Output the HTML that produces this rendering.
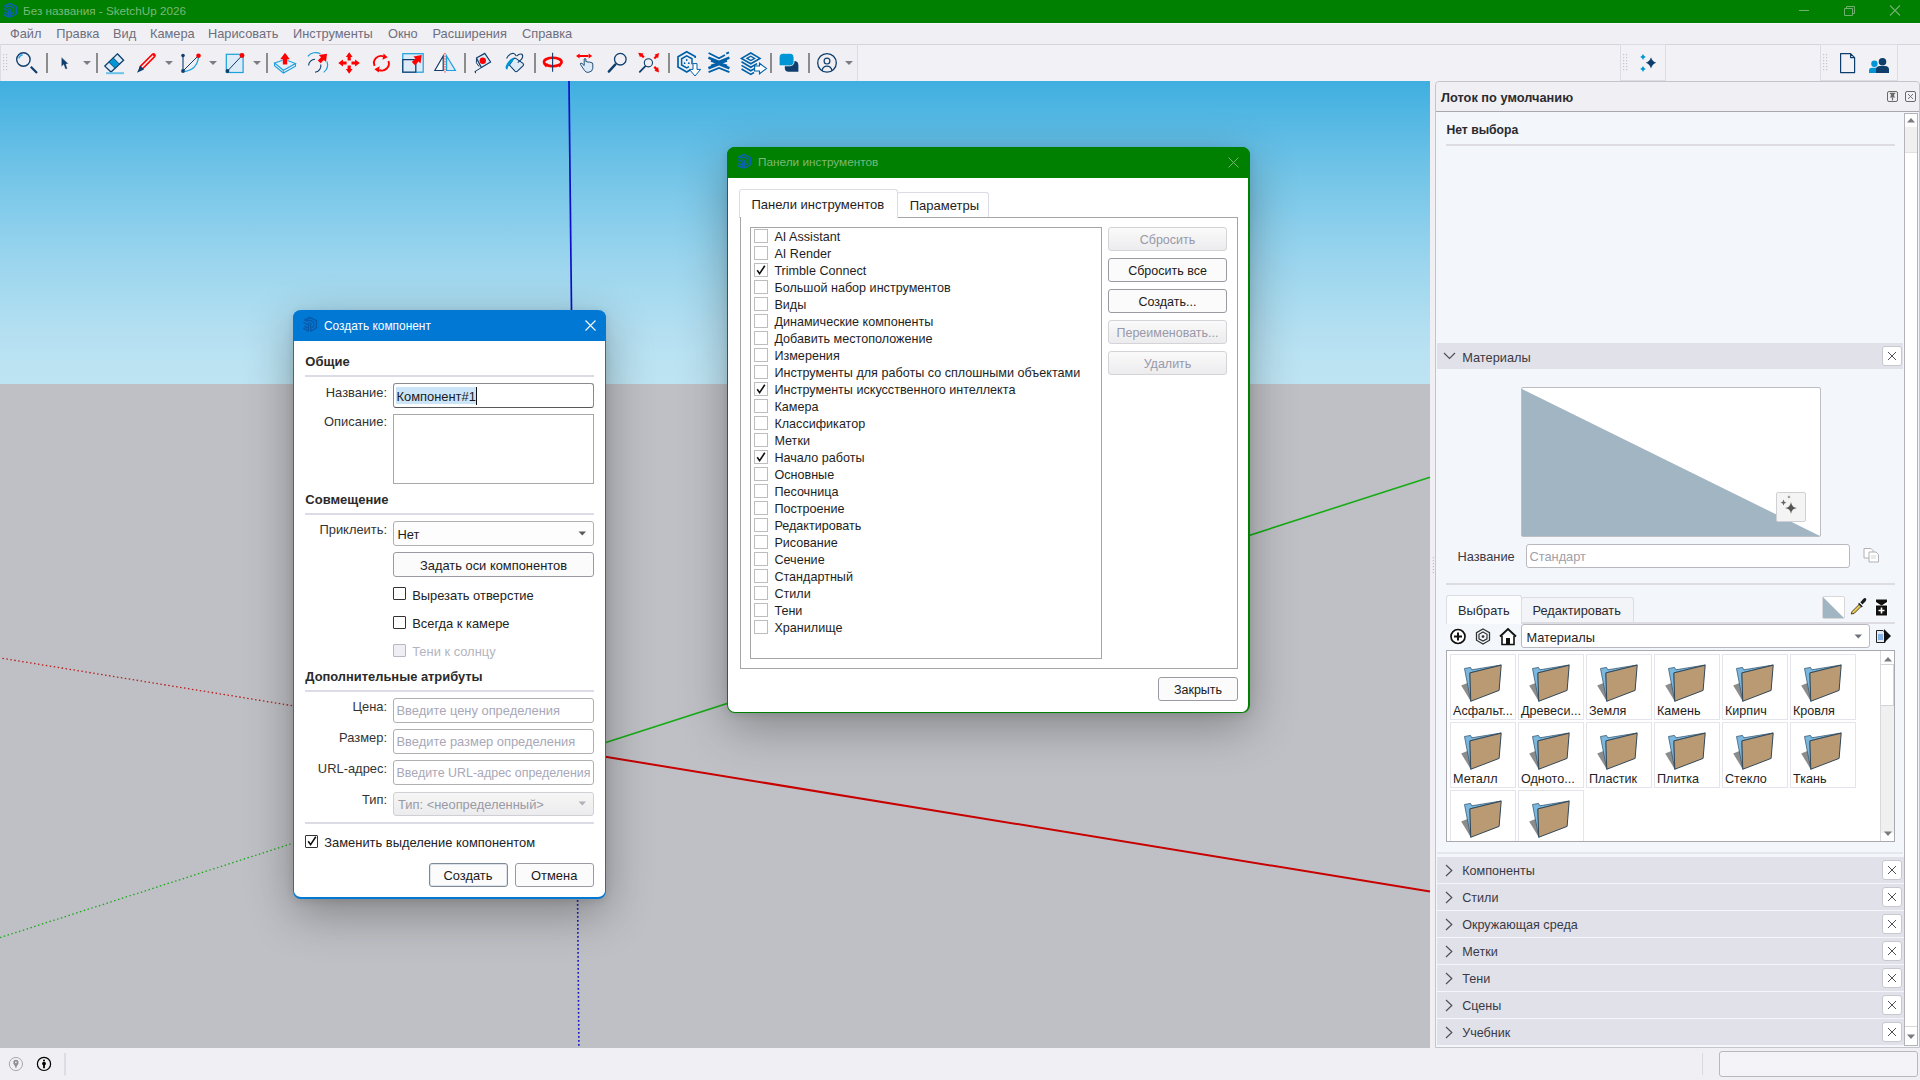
<!DOCTYPE html>
<html><head><meta charset="utf-8">
<style>
html,body{margin:0;padding:0;width:1920px;height:1080px;overflow:hidden;background:#f0f0f4;font-family:"Liberation Sans",sans-serif;}
.a{position:absolute}
.t{position:absolute;white-space:nowrap;line-height:15px;font-size:12.5px;color:#1e1e1e}
svg{position:absolute;overflow:visible}
</style></head><body>
<div class="a" style="left:0;top:0;width:1920px;height:23px;background:#008000"></div>
<div class="a" style="left:0;top:23px;width:1920px;height:1px;background:#f8f6fb"></div>
<div class="t" style="left:23px;top:2.7px;font-size:11.7px;color:#7ab97a">Без названия - SketchUp 2026</div>
<div class="a" style="left:0;top:44px;width:1920px;height:1px;background:#d4d4da"></div>
<div class="a" style="left:857px;top:45px;width:1063px;height:36px;background:#f2f2f6"></div>
<div class="a" style="left:0;top:81px;width:1430px;height:303px;background:linear-gradient(rgb(63,175,224) 0%,rgb(80,182,227) 10%,rgb(97,189,229) 20%,rgb(113,196,231) 30%,rgb(128,202,234) 40%,rgb(142,208,236) 50%,rgb(155,213,238) 60%,rgb(166,218,239) 70%,rgb(177,222,241) 80%,rgb(185,226,242) 90%,rgb(190,228,243) 100%)"></div>
<div class="a" style="left:0;top:1048px;width:1920px;height:32px;background:#f0f0f4"></div>
<div class="a" style="left:0;top:384px;width:1430px;height:664px;background:#bfc0c5"></div>
<div class="t" style="left:10px;top:26px;font-size:12.8px;color:#6e6e7e">Файл</div>
<div class="t" style="left:56.25px;top:26px;font-size:12.8px;color:#6e6e7e">Правка</div>
<div class="t" style="left:113px;top:26px;font-size:12.8px;color:#6e6e7e">Вид</div>
<div class="t" style="left:150px;top:26px;font-size:12.8px;color:#6e6e7e">Камера</div>
<div class="t" style="left:208px;top:26px;font-size:12.8px;color:#6e6e7e">Нарисовать</div>
<div class="t" style="left:293px;top:26px;font-size:12.8px;color:#6e6e7e">Инструменты</div>
<div class="t" style="left:388px;top:26px;font-size:12.8px;color:#6e6e7e">Окно</div>
<div class="t" style="left:432.5px;top:26px;font-size:12.8px;color:#6e6e7e">Расширения</div>
<div class="t" style="left:522px;top:26px;font-size:12.8px;color:#6e6e7e">Справка</div>
<svg style="left:0;top:0" width="1920" height="81" viewBox="0 0 1920 81">
<g fill="#c4c4cc"><rect x="3" y="54" width="1.2" height="1.2"/><rect x="3" y="57" width="1.2" height="1.2"/><rect x="3" y="60" width="1.2" height="1.2"/><rect x="3" y="63" width="1.2" height="1.2"/><rect x="3" y="66" width="1.2" height="1.2"/><rect x="3" y="69" width="1.2" height="1.2"/><rect x="6" y="54" width="1.2" height="1.2"/><rect x="6" y="57" width="1.2" height="1.2"/><rect x="6" y="60" width="1.2" height="1.2"/><rect x="6" y="63" width="1.2" height="1.2"/><rect x="6" y="66" width="1.2" height="1.2"/><rect x="6" y="69" width="1.2" height="1.2"/></g>
<rect x="0" y="44" width="1" height="37" fill="#dcdce4"/>
<g fill="#8c8c8c"><rect x="46" y="53" width="2" height="20"/><rect x="96" y="53" width="2" height="20"/><rect x="266" y="53" width="2" height="20"/><rect x="464" y="53" width="2" height="20"/><rect x="534" y="53" width="2" height="20"/><rect x="668" y="53" width="2" height="20"/><rect x="770" y="53" width="2" height="20"/><rect x="808" y="53" width="2" height="20"/></g>
<g fill="#7c7c84"><path d="M83 61 h8 l-4 4z"/><path d="M165 61 h8 l-4 4z"/><path d="M209 61 h8 l-4 4z"/><path d="M253 61 h8 l-4 4z"/><path d="M845 61 h8 l-4 4z"/></g>
<!-- magnifier -->
<circle cx="23.4" cy="59.5" r="6.7" fill="none" stroke="#0f3e6c" stroke-width="1.4"/>
<path d="M18.9 58.4 A4.6 4.6 0 0 1 22.6 54.7" fill="none" stroke="#21a8e8" stroke-width="1.5"/>
<path d="M30.8 66.8 L37 73" stroke="#0f3e6c" stroke-width="2.2"/>
<!-- arrow -->
<path d="M61.2 56.8 V67.2 L63.6 64.8 L65 68.8 Q65.5 69.6 66.6 69.1 L67.5 68.4 L66.1 64.3 L68.6 63.8z" fill="#0f3e6c" stroke="#fff" stroke-width="0.6" stroke-linejoin="round"/>
<!-- eraser -->
<path d="M117.4 53.8 L123.6 60.3 L111 72 L104.8 66.1z" fill="#dcebf7" stroke="#0f3e6c" stroke-width="1.3"/>
<path d="M113.24 57.86 L119.44 64.16 L115.03 68.26 L108.83 62.16z" fill="#0096d6" stroke="#0f3e6c" stroke-width="0.9"/>
<rect x="106" y="72.2" width="18" height="2" fill="#6ac3e8"/>
<!-- pencil -->
<path d="M141.5 67.5 L153.5 55.5" stroke="#ff0000" stroke-width="4.6" stroke-linecap="round"/>
<path d="M141.8 67.2 L153.2 55.8" stroke="#fff" stroke-width="1.6"/>
<path d="M137 72.8 L140.2 65.8 L144 69.6z" fill="#0f3e6c"/>
<!-- arc -->
<path d="M183 55.5 V71" stroke="#0f3e6c" stroke-width="1.1"/>
<path d="M183 71 L198 56" stroke="#0f3e6c" stroke-width="1"/>
<path d="M184 71.5 Q197 70 198.5 57" fill="none" stroke="#1aa0dc" stroke-width="1.3"/>
<circle cx="183" cy="55.5" r="1.8" fill="#0f3e6c"/><circle cx="183" cy="71" r="1.9" fill="#0f3e6c"/>
<circle cx="198.5" cy="55.8" r="2.3" fill="#ff0000"/>
<!-- rect -->
<rect x="226.3" y="54.3" width="16.8" height="18.2" fill="#dcebf7" stroke="#1aa0dc" stroke-width="1.2"/>
<path d="M227.5 71 L241.8 55.8" stroke="#0f3e6c" stroke-width="1"/>
<circle cx="227.5" cy="71" r="1.9" fill="#0f3e6c"/><circle cx="242" cy="55.5" r="2.4" fill="#ff0000"/>
<!-- push pull -->
<path d="M274.5 63 L285 59.5 L295.5 63.5 L283.4 70.3z" fill="#e2f0fa" stroke="#1aa0dc" stroke-width="1.1"/>
<path d="M274.5 63 V65.8 L283.4 73 L295.5 66.3 V63.5" fill="none" stroke="#1aa0dc" stroke-width="1.1"/>
<path d="M283.4 70.3 V73" stroke="#1aa0dc" stroke-width="0.8"/>
<path d="M285 52.8 L289.8 59.2 H287.2 V64.6 H282.8 V59.2 H280.2z" fill="#ff0000" stroke="#fff" stroke-width="0.6" paint-order="stroke"/>
<!-- offset -->
<path d="M307.8 56.3 A10 10 0 0 1 320.4 53.8" fill="none" stroke="#1aa0dc" stroke-width="1.2"/>
<path d="M327 61.5 A10 10 0 0 1 323.7 72.4" fill="none" stroke="#1aa0dc" stroke-width="1.2"/>
<path d="M308.6 65.6 A6.5 6.5 0 0 1 315 59.3" fill="none" stroke="#0f3e6c" stroke-width="1.1"/>
<path d="M320.8 64.5 A6.5 6.5 0 0 1 315 72.3" fill="none" stroke="#0f3e6c" stroke-width="1.1"/>
<path d="M327 53.8 L326 62 L323.8 60 L320.6 63.2 L317.8 60.4 L321 57.2 L318.8 55z" fill="#ff0000"/>
<!-- move -->
<path d="M349.2 52.3 L352.6 57 H350.8 V60.6 H347.6 V57 H345.8z M349.2 73.7 L352.6 69 H350.8 V65.4 H347.6 V69 H345.8z M338.3 63 L343 59.6 V61.4 H346.6 V64.6 H343 V66.4z M359.8 63 L355.1 59.6 V61.4 H351.5 V64.6 H355.1 V66.4z" fill="#ff0000"/>
<!-- rotate -->
<path d="M374.6 65.8 A7 7 0 0 1 383.4 56.4" fill="none" stroke="#ff0000" stroke-width="1.9"/>
<path d="M383.6 53.6 L387.6 57.2 L382.6 59.8z" fill="#ff0000"/>
<path d="M388.4 61 A7 7 0 0 1 379.2 70" fill="none" stroke="#ff0000" stroke-width="1.9"/>
<path d="M374.4 69.2 L379.6 66.2 L378.8 72.6z" fill="#ff0000"/>
<!-- scale -->
<rect x="402.8" y="53.7" width="20.4" height="18.5" fill="#dcebf7" stroke="#1aa0dc" stroke-width="1.2"/>
<path d="M402.8 59.7 H415.8 V72.2 H402.8z" fill="#dcebf7" stroke="#0f3e6c" stroke-width="1.3"/>
<path d="M421.8 55 L420.5 63.5 L418.6 61.6 L415 65.2 L411.8 62 L415.4 58.4 L413.4 56.4z" fill="#ff0000"/>
<!-- flip -->
<path d="M434.8 70.5 L443.2 56 V70.5z" fill="#fff" stroke="#0f3e6c" stroke-width="1.2"/>
<path d="M446.6 56 L455.4 70.5 H446.6z" fill="#dcebf7" stroke="#1aa0dc" stroke-width="1.2"/>
<path d="M445 53 V72.5" stroke="#f87878" stroke-width="1.8" stroke-dasharray="1.6 1"/>
<!-- tape -->
<path d="M476.4 58 L484.8 53.4 L490.6 62 L481.4 67.6z" fill="#dcebf7" stroke="#0f3e6c" stroke-width="1.2" stroke-linejoin="round"/>
<circle cx="482.8" cy="60.8" r="3.2" fill="#ff0000"/>
<path d="M476.5 58.5 Q475 63 479 66.5" fill="none" stroke="#0f3e6c" stroke-width="1"/>
<path d="M481.5 67.5 L474.6 71.8 M475.3 71 L475.6 73.2" stroke="#0f3e6c" stroke-width="1"/>
<!-- paint -->
<path d="M509.4 65 L513.6 58.8 Q514.6 57.6 515.8 58.4 L523 63.4 Q524 64.4 523.2 65.6 L517.4 71.2 Q516.2 72.2 515 71.2z" fill="#dcebf7" stroke="#0f3e6c" stroke-width="1.1"/>
<path d="M506.6 58.6 Q509 53.6 513 53.3 Q515.2 53.6 516.2 56" fill="none" stroke="#0f3e6c" stroke-width="1.1"/>
<path d="M516.6 56.2 Q519.4 53.2 522 54.2 Q523.6 56.2 521.6 59.2 L517.8 62.6" fill="none" stroke="#0f3e6c" stroke-width="1.1"/>
<path d="M513.6 57.6 Q508 60 505.6 66.6 Q505.2 69.6 507.4 69.4 Q508.4 64.6 512.8 61.2z" fill="#0096d6"/>
<!-- orbit -->
<ellipse cx="552.8" cy="62" rx="8.8" ry="4.2" fill="none" stroke="#ff0000" stroke-width="2.6"/>
<path d="M548 63.5 L546 67.4 L543 63.8z M557.4 64.8 L562 63 L560 67.6z" fill="#ff0000"/>
<path d="M552.6 52.7 V71.8" stroke="#0f3e6c" stroke-width="1.1"/>
<!-- pan -->
<path d="M576 56 L579.6 53.4 V58.6z M592.2 56 L588.6 53.4 V58.6z M579 55 H589 V57 H579z" fill="#ff0000"/>
<path d="M584.2 59 V65.5 L582 63.4 Q580 62.6 580.4 64.4 L584.6 70.6 Q586 72.6 588.2 72.4 Q592.4 72 592.8 68.4 V64 Q592.6 62.4 591 62.6 Q589.8 61.6 588 62.2 Q587 61.4 585.9 61.6 V59 Q585 57.6 584.2 59z" fill="#dcebf7" stroke="#0f3e6c" stroke-width="0.9"/>
<!-- zoom -->
<circle cx="620.3" cy="59.2" r="5.8" fill="none" stroke="#0f3e6c" stroke-width="1.3"/>
<path d="M615.4 64.4 L608.8 71.6" stroke="#0f3e6c" stroke-width="2.4" stroke-linecap="round"/>
<!-- zoom ext -->
<circle cx="648.4" cy="62.8" r="4.1" fill="none" stroke="#0f3e6c" stroke-width="1.1"/>
<path d="M645.4 66.2 L639.8 71.8" stroke="#0f3e6c" stroke-width="1.8" stroke-linecap="round"/>
<path d="M638.2 52.7 L643.6 53.6 L642.6 54.6 L644.6 56.6 L643 58.2 L641 56.2 L640 57.2z M659 52.9 L658.1 58.3 L657.1 57.3 L655.1 59.3 L653.5 57.7 L655.5 55.7 L654.5 54.7z M659 72.5 L658.1 67.1 L657.1 68.1 L655.1 66.1 L653.5 67.7 L655.5 69.7 L654.5 70.7z" fill="#ff0000"/>
</svg><svg style="left:0;top:0" width="1920" height="81" viewBox="0 0 1920 81">
<!-- 3DW -->
<path d="M695.2 58 V56.6 L686.7 51.8 L678 56.8 V67 L686.7 72 L690 70" fill="none" stroke="#0060a8" stroke-width="1.7"/>
<path d="M692 64.2 V58.8 L686.7 55.8 L681.6 58.8 V65 L686.7 68 L689 66.6" fill="none" stroke="#0060a8" stroke-width="1.5"/>
<circle cx="686.7" cy="60" r="0.9" fill="#0060a8"/><circle cx="684.6" cy="63.2" r="0.9" fill="#0060a8"/><circle cx="688.8" cy="63.2" r="0.9" fill="#0060a8"/>
<path d="M693 63.6 H697 V69.4 H700.6 L695 76 L689.4 69.4 H693z" fill="#fff" stroke="#0060a8" stroke-width="1"/>
<!-- ext warehouse -->
<path d="M708.6 53 L719 58.2 L725 55" fill="none" stroke="#0060a8" stroke-width="1.8"/>
<path d="M726.2 53.6 L729 52.4" stroke="#0060a8" stroke-width="1.8"/>
<path d="M708.4 57.6 L719 62 L729.4 57.6" fill="none" stroke="#0060a8" stroke-width="2.6"/>
<path d="M711 60.5 L727 66 M727 60.5 L711 66" stroke="#0060a8" stroke-width="2.4"/>
<path d="M708.4 68.2 L719 64 L729.4 68.2" fill="none" stroke="#0060a8" stroke-width="2.6"/>
<path d="M708.6 72.2 L719 68 L729.4 72.2" fill="none" stroke="#0060a8" stroke-width="1.8"/>
<!-- layout -->
<path d="M741.5 58.4 L750.8 53 L760 58.4 L750.8 63.8z" fill="none" stroke="#0060a8" stroke-width="1.6"/>
<path d="M747 58.4 L750.8 56.2 L754.6 58.4 L750.8 60.6z" fill="none" stroke="#0060a8" stroke-width="1.3"/>
<path d="M741.5 61.8 L750.8 67.2 L757 63.6 M741.5 65.4 L750.8 70.8 L755 68.4 M741.5 69 L750.8 74.4 L754 72.5" fill="none" stroke="#0060a8" stroke-width="1.6"/>
<path d="M754.6 66 H759.5 V63.2 L766.5 68.5 L759.5 73.8 V71 H754.6z" fill="#fff" stroke="#0060a8" stroke-width="1.1"/>
<!-- chat -->
<path d="M788 61 H794 Q798.4 61 798.4 65.4 V71.8 H788.6 Q784.8 71.8 784.8 67.8 V64.4 Q784.8 61 788 61z" fill="#0f3e6c"/>
<path d="M783.5 53.3 H789.6 Q794 53.3 794 57.7 V61.4 Q794 65.8 789.6 65.8 H779.1 V57.7 Q779.1 53.3 783.5 53.3z" fill="#0096d6" stroke="#fff" stroke-width="0.8"/>
<!-- profile -->
<circle cx="827" cy="62.9" r="9.3" fill="none" stroke="#0f3e6c" stroke-width="1.3"/>
<circle cx="827" cy="61.1" r="2.9" fill="none" stroke="#0f3e6c" stroke-width="1.2"/>
<path d="M822 70.8 Q823 66.2 827 66.2 Q831 66.2 832 70.8" fill="none" stroke="#0f3e6c" stroke-width="1.2"/>
<!-- right segments -->
<rect x="857" y="44" width="1" height="37" fill="#dcdce4"/>
<rect x="1620.5" y="44.5" width="45" height="36" fill="none" stroke="#dcdce4" stroke-width="1"/>
<rect x="1820.5" y="44.5" width="77" height="36" fill="none" stroke="#dcdce4" stroke-width="1"/>
<g fill="#c4c4cc"><rect x="1623" y="54" width="1.2" height="1.2"/><rect x="1623" y="57" width="1.2" height="1.2"/><rect x="1623" y="60" width="1.2" height="1.2"/><rect x="1623" y="63" width="1.2" height="1.2"/><rect x="1623" y="66" width="1.2" height="1.2"/><rect x="1623" y="69" width="1.2" height="1.2"/><rect x="1626" y="54" width="1.2" height="1.2"/><rect x="1626" y="57" width="1.2" height="1.2"/><rect x="1626" y="60" width="1.2" height="1.2"/><rect x="1626" y="63" width="1.2" height="1.2"/><rect x="1626" y="66" width="1.2" height="1.2"/><rect x="1626" y="69" width="1.2" height="1.2"/><rect x="1823" y="54" width="1.2" height="1.2"/><rect x="1823" y="57" width="1.2" height="1.2"/><rect x="1823" y="60" width="1.2" height="1.2"/><rect x="1823" y="63" width="1.2" height="1.2"/><rect x="1823" y="66" width="1.2" height="1.2"/><rect x="1823" y="69" width="1.2" height="1.2"/><rect x="1826" y="54" width="1.2" height="1.2"/><rect x="1826" y="57" width="1.2" height="1.2"/><rect x="1826" y="60" width="1.2" height="1.2"/><rect x="1826" y="63" width="1.2" height="1.2"/><rect x="1826" y="66" width="1.2" height="1.2"/><rect x="1826" y="69" width="1.2" height="1.2"/></g>
<path d="M1651 57.199999999999996 Q1652.27 61.46 1656.3 62.8 Q1652.27 64.14 1651 68.39999999999999 Q1649.73 64.14 1645.7 62.8 Q1649.73 61.46 1651 57.199999999999996z" fill="#0f3e6c"/>
<path d="M1643 54.1 Q1643.67 56.30 1645.8 57 Q1643.67 57.70 1643 59.9 Q1642.33 57.70 1640.2 57 Q1642.33 56.30 1643 54.1z" fill="#0096d6"/>
<path d="M1643 66.1 Q1643.67 68.30 1645.8 69 Q1643.67 69.70 1643 71.9 Q1642.33 69.70 1640.2 69 Q1642.33 68.30 1643 66.1z" fill="#0096d6"/>
<path d="M1840.6 53.6 H1850.6 L1854.6 57.6 V72.6 H1840.6z M1850.6 53.6 V57.6 H1854.6" fill="none" stroke="#0f3e6c" stroke-width="1.2" stroke-linejoin="round"/>
<circle cx="1874.4" cy="63.8" r="3.2" fill="#0096d6"/>
<path d="M1869 73 V70.5 Q1869 67.8 1872 67.8 H1877 Q1879 67.8 1879.5 69 V73z" fill="#0096d6"/>
<circle cx="1882.5" cy="61.8" r="3.8" fill="#0f3e6c"/>
<path d="M1876 73 V69.6 Q1876 66 1880 66 H1885 Q1889 66 1889 69.6 V73z" fill="#0f3e6c"/>
<!-- window controls -->
<path d="M1799 10.5 H1809" stroke="#6fb06f" stroke-width="1"/>
<path d="M1844.5 8.5 h8 v7 h-8z M1846.5 8.5 v-2 h8 v7 h-2" fill="none" stroke="#6fb06f" stroke-width="1"/>
<path d="M1890 5.5 L1900 15.5 M1900 5.5 L1890 15.5" stroke="#6fb06f" stroke-width="1.1"/>
<!-- app icon -->
<g fill="none" stroke="#0d62b4" stroke-width="1.35" stroke-linejoin="round">
<path d="M4.2 6.4 L9.8 3.3 L16.4 6.7 V13.6 L10.8 17.2"/><path d="M6 7 L9.8 6.2 L13.6 8.2 V12.6 L12 13.4"/><path d="M3.4 8.4 L8.6 11 V17.4"/><path d="M4.2 12.2 L7.8 14.1"/><path d="M3.4 14.4 L8.6 17.2"/><path d="M8.4 8.6 L10.8 9.9 V17.2"/>
</g>
</svg><svg style="left:0;top:81px" width="1430" height="966" viewBox="0 81 1430 966">
<path d="M569 81 L576.3 752.05" stroke="#0c10c8" stroke-width="1.7"/>
<path d="M576.3 752.05 L578.9 1047" stroke="#1a1ac0" stroke-width="1.6" stroke-dasharray="1.6 2.4"/>
<path d="M576.3 752.05 L1430 891.46" stroke="#c80000" stroke-width="2"/>
<path d="M576.3 752.05 L0 657.94" stroke="#b81c1c" stroke-width="1.3" stroke-dasharray="1.5 2.5"/>
<path d="M576.3 752.05 L1430 477.16" stroke="#16ac16" stroke-width="1.6"/>
<path d="M576.3 752.05 L0 937.62" stroke="#18a818" stroke-width="1.3" stroke-dasharray="1.5 2.5"/>
</svg>
<div class="a" style="left:1435px;top:81px;width:485px;height:967px;box-sizing:border-box;border:1px solid #c4c4ca;border-radius:4px 4px 0 0;background:#f3f6fb"></div>
<div class="a" style="left:1436px;top:82px;width:483px;height:29px;border-radius:4px 4px 0 0;background:#f0f0f4"></div>
<div class="a" style="left:1436px;top:111px;width:483px;height:1px;background:#a8a8ae"></div>
<div class="t" style="left:1441.0px;top:89.6px;font-size:12.8px;color:#2a2a30;font-weight:bold;">Лоток по умолчанию</div>
<svg style="left:1887px;top:91px" width="30" height="11" viewBox="0 0 30 11"><rect x="0.5" y="0.5" width="10" height="10" rx="1.5" fill="none" stroke="#6a6a6a" stroke-width="1"/><path d="M2.8 1.8 H8.2 V3 H7.2 V5.2 L8.4 6.6 H2.6 L3.8 5.2 V3 H2.8z" fill="#6a6a6a"/><path d="M5.5 6.5 V9.4" stroke="#6a6a6a" stroke-width="1.2"/><rect x="18.5" y="0.5" width="10" height="10" rx="1.5" fill="none" stroke="#6a6a6a" stroke-width="1"/><path d="M21 3 L26 8 M26 3 L21 8" stroke="#6a6a6a" stroke-width="0.9"/></svg>
<div class="a" style="left:1904px;top:113px;width:14px;height:933px;box-sizing:border-box;border:1px solid #b4b4b8;background:#fff"></div>
<div class="a" style="left:1905px;top:127px;width:12px;height:25px;background:#f0f0f0;border-bottom:1px solid #e0e0e0"></div>
<svg style="left:1906px;top:117px" width="10" height="6" viewBox="0 0 10 6"><path d="M1 5.5 L5 1 L9 5.5z" fill="#7a7a80"/></svg>
<svg style="left:1906px;top:1034px" width="10" height="6" viewBox="0 0 10 6"><path d="M1 0.5 L5 5 L9 0.5z" fill="#7a7a80"/></svg>
<div class="a" style="left:1905px;top:1026px;width:12px;height:1px;background:#d8d8dc"></div>
<div class="t" style="left:1446.4px;top:123.4px;font-size:12.2px;color:#2a2a30;font-weight:bold;">Нет выбора</div>
<div class="a" style="left:1446px;top:144px;width:449px;height:2px;background:#dcdce2"></div>
<div class="a" style="left:1437px;top:343px;width:466px;height:26px;background:#e1e1e9"></div>
<svg style="left:1443px;top:352px" width="13" height="8" viewBox="0 0 13 8"><path d="M1 1 L6.5 6.5 L12 1" fill="none" stroke="#505058" stroke-width="1.2"/></svg>
<div class="t" style="left:1462.2px;top:350.0px;font-size:12.8px;color:#3a3a44;">Материалы</div>
<div class="a" style="left:1881.5px;top:345.5px;width:20.0px;height:20.0px;box-sizing:border-box;border:1px solid #c8c8d0;border-radius:3px;background:#fff"></div>
<svg style="left:1886.5px;top:350.5px" width="10" height="10" viewBox="0 0 10 10"><path d="M1 1 L9 9 M9 1 L1 9" stroke="#505058" stroke-width="1"/></svg>
<div class="a" style="left:1521px;top:387px;width:300px;height:150px;box-sizing:border-box;border:1px solid #bdbdc2;border-radius:2px;background:#fff"></div>
<svg style="left:1522px;top:388px" width="298" height="148" viewBox="0 0 298 148"><path d="M0 1 L298 148 H0z" fill="#a2b5c3"/></svg>
<div class="a" style="left:1776px;top:492px;width:30px;height:30px;box-sizing:border-box;border:1px solid #d0d0d4;border-radius:2px;background:#f4f4f4"></div>
<svg style="left:1776px;top:492px" width="30" height="30" viewBox="0 0 30 30"><path d="M15 10 Q15.6 15.4 21 16 Q15.6 16.6 15 22 Q14.4 16.6 9 16 Q14.4 15.4 15 10z" fill="#555"/><path d="M7.5 7.5 Q7.8 10.2 10.5 10.5 Q7.8 10.8 7.5 13.5 Q7.2 10.8 4.5 10.5 Q7.2 10.2 7.5 7.5z" fill="#666"/><path d="M13 3.2 Q13.1 4.9 14.8 5 Q13.1 5.1 13 6.8 Q12.9 5.1 11.2 5 Q12.9 4.9 13 3.2z" fill="#777"/></svg>
<div class="t" style="left:1457.5px;top:549.3px;font-size:12.8px;color:#3a3a44;">Название</div>
<div class="a" style="left:1526px;top:543.5px;width:324px;height:24.5px;box-sizing:border-box;border:1px solid #b8b8be;border-radius:3px;background:#fff"></div>
<div class="t" style="left:1529.5px;top:549.3px;font-size:12.8px;color:#a0a0aa;">Стандарт</div>
<svg style="left:1863px;top:547px" width="18" height="16" viewBox="0 0 18 16"><path d="M1 1.5 H8 L10 3.5 V11 H1z" fill="#fff" stroke="#b0b0b6" stroke-width="1"/><path d="M6 5 H13 L15.5 7.5 V15 H6z" fill="#fff" stroke="#b0b0b6" stroke-width="1"/><path d="M8 9 H13 M8 11 H13" stroke="#c8c8cc" stroke-width="0.8"/></svg>
<div class="a" style="left:1446px;top:583px;width:449px;height:2px;background:#dcdce2"></div>
<div class="a" style="left:1446px;top:595px;width:76px;height:29px;box-sizing:border-box;border:1px solid #dcdce6;border-bottom:none;border-radius:3px 3px 0 0;background:#fbfcfe"></div>
<div class="a" style="left:1521px;top:597px;width:113px;height:26px;box-sizing:border-box;border:1px solid #dcdce6;border-bottom:none;border-radius:3px 3px 0 0;background:#f2f4f8"></div>
<div class="a" style="left:1521px;top:622px;width:374px;height:2px;background:#dcdce2"></div>
<div class="t" style="left:1458.0px;top:602.6px;font-size:12.8px;color:#2a2a30;">Выбрать</div>
<div class="t" style="left:1532.5px;top:603.2px;font-size:12.8px;color:#2a2a30;">Редактировать</div>
<div class="a" style="left:1822px;top:595.5px;width:23px;height:23.5px;box-sizing:border-box;border:1px solid #d8d8dc;border-radius:2px;background:#fff"></div>
<svg style="left:1823px;top:596.5px" width="21" height="21" viewBox="0 0 21 21"><path d="M0 0 L21 21 H0z" fill="#a2b5c3"/></svg>
<svg style="left:1849px;top:595px" width="18" height="21" viewBox="0 0 18 21"><path d="M2.2 19 L3.2 16.4 L10.4 9.2 L12.4 11.2 L5.2 18.4z" fill="#f2c84a" stroke="#333" stroke-width="0.9"/><path d="M9.6 8.4 L13.2 12" stroke="#222" stroke-width="1.6"/><path d="M11.4 7.2 L14 4.2 Q15.8 2.4 17 3.6 Q18 4.8 16.4 6.6 L13.4 9.4z" fill="#1a1a1a"/></svg>
<svg style="left:1875px;top:599px" width="13" height="17" viewBox="0 0 13 17"><rect x="0.5" y="0.5" width="12" height="16" fill="#fff" stroke="#fff"/><path d="M1 0.5 H12 V3 L6.5 6.5 L1 3z" fill="#111"/><rect x="1" y="6.5" width="11" height="10" fill="#111"/><path d="M6.5 8.5 V14.5 M3.5 11.5 H9.5" stroke="#fff" stroke-width="1.6"/></svg>
<svg style="left:1449px;top:627px" width="70" height="19" viewBox="0 0 70 19"><circle cx="9" cy="9.5" r="7" fill="#fff" stroke="#111" stroke-width="1.7"/><path d="M9 5.5 V13.5 M5 9.5 H13" stroke="#111" stroke-width="2"/><path d="M34 2 L40.5 5.6 V13.2 L34 17 L27.5 13.2 V5.6z" fill="none" stroke="#333" stroke-width="1.3"/><path d="M34 5 L38 7.3 V11.8 L34 14 L30 11.8 V7.3z" fill="none" stroke="#333" stroke-width="1.2"/><circle cx="34" cy="9.6" r="1.4" fill="#333"/><path d="M51 9.5 L59 2 L67 9.5" fill="none" stroke="#111" stroke-width="1.8"/><path d="M53 8.5 V17.5 H65 V8.5" fill="#fff" stroke="#111" stroke-width="1.6"/><rect x="57" y="11" width="4" height="6.5" fill="#111"/></svg>
<div class="a" style="left:1521px;top:624px;width:349px;height:24px;box-sizing:border-box;border:1px solid #b8b8be;border-radius:3px;background:#fff"></div>
<div class="t" style="left:1526.4px;top:629.8px;font-size:12.8px;color:#1e1e24;">Материалы</div>
<svg style="left:1854px;top:634px" width="9" height="5" viewBox="0 0 9 5"><path d="M0.5 0.5 H8 L4.25 4.5z" fill="#707078"/></svg>
<svg style="left:1875px;top:627px" width="17" height="18" viewBox="0 0 17 18"><path d="M1.5 3.5 H8 L10 5.5 V15.5 H1.5z" fill="#e4eef8" stroke="#222" stroke-width="1"/><path d="M3 8 H8 M3 10 H8 M3 12 H8" stroke="#2a7ad0" stroke-width="1"/><path d="M9 2 L16 9 L9 16z" fill="#111"/></svg>
<div class="a" style="left:1446px;top:650px;width:449px;height:192px;box-sizing:border-box;border:1px solid #a8a8ae;background:#fff"></div>
<div class="a" style="left:1880px;top:651px;width:14px;height:190px;box-sizing:border-box;border-left:1px solid #d8d8dc;background:#fff"></div>
<div class="a" style="left:1881px;top:705px;width:13px;height:128px;background:#f0f0f0"></div>
<div class="a" style="left:1881px;top:664px;width:13px;height:42px;box-sizing:border-box;border:1px solid #d4d4d8;border-left:none;background:#fff"></div>
<svg style="left:1883px;top:656px" width="10" height="6" viewBox="0 0 10 6"><path d="M1 5.5 L5 1 L9 5.5z" fill="#7a7a80"/></svg>
<svg style="left:1883px;top:831px" width="10" height="6" viewBox="0 0 10 6"><path d="M1 0.5 L5 5 L9 0.5z" fill="#7a7a80"/></svg>
<div class="a" style="left:1450px;top:654px;width:66px;height:66px;box-sizing:border-box;border:1px solid #e4e4ec;border-bottom-width:1px"></div>
<svg style="left:1460px;top:663px" width="42" height="40" viewBox="0 0 42 40"><path d="M1.2 22.5 L9.8 19 L10.75 38.25z" fill="#8c8c8c"/><path d="M4.5 5.5 L10.5 4.4 L11.8 6.8 L41.2 2 L9.9 9.9 L10.75 38.25z" fill="#7ab8e0" stroke="#3a5a72" stroke-width="0.8" stroke-linejoin="round"/><path d="M9.9 9.9 L41.2 2.2 L39.1 27.4 L10.75 38.25z" fill="#b99a72" stroke="#33485a" stroke-width="1" stroke-linejoin="round"/></svg>
<div class="t" style="left:1453.0px;top:704.2px;font-size:12.6px;color:#1e1e24;">Асфальт...</div>
<div class="a" style="left:1518px;top:654px;width:66px;height:66px;box-sizing:border-box;border:1px solid #e4e4ec;border-bottom-width:1px"></div>
<svg style="left:1528px;top:663px" width="42" height="40" viewBox="0 0 42 40"><path d="M1.2 22.5 L9.8 19 L10.75 38.25z" fill="#8c8c8c"/><path d="M4.5 5.5 L10.5 4.4 L11.8 6.8 L41.2 2 L9.9 9.9 L10.75 38.25z" fill="#7ab8e0" stroke="#3a5a72" stroke-width="0.8" stroke-linejoin="round"/><path d="M9.9 9.9 L41.2 2.2 L39.1 27.4 L10.75 38.25z" fill="#b99a72" stroke="#33485a" stroke-width="1" stroke-linejoin="round"/></svg>
<div class="t" style="left:1521.0px;top:704.2px;font-size:12.6px;color:#1e1e24;">Древеси...</div>
<div class="a" style="left:1586px;top:654px;width:66px;height:66px;box-sizing:border-box;border:1px solid #e4e4ec;border-bottom-width:1px"></div>
<svg style="left:1596px;top:663px" width="42" height="40" viewBox="0 0 42 40"><path d="M1.2 22.5 L9.8 19 L10.75 38.25z" fill="#8c8c8c"/><path d="M4.5 5.5 L10.5 4.4 L11.8 6.8 L41.2 2 L9.9 9.9 L10.75 38.25z" fill="#7ab8e0" stroke="#3a5a72" stroke-width="0.8" stroke-linejoin="round"/><path d="M9.9 9.9 L41.2 2.2 L39.1 27.4 L10.75 38.25z" fill="#b99a72" stroke="#33485a" stroke-width="1" stroke-linejoin="round"/></svg>
<div class="t" style="left:1589.0px;top:704.2px;font-size:12.6px;color:#1e1e24;">Земля</div>
<div class="a" style="left:1654px;top:654px;width:66px;height:66px;box-sizing:border-box;border:1px solid #e4e4ec;border-bottom-width:1px"></div>
<svg style="left:1664px;top:663px" width="42" height="40" viewBox="0 0 42 40"><path d="M1.2 22.5 L9.8 19 L10.75 38.25z" fill="#8c8c8c"/><path d="M4.5 5.5 L10.5 4.4 L11.8 6.8 L41.2 2 L9.9 9.9 L10.75 38.25z" fill="#7ab8e0" stroke="#3a5a72" stroke-width="0.8" stroke-linejoin="round"/><path d="M9.9 9.9 L41.2 2.2 L39.1 27.4 L10.75 38.25z" fill="#b99a72" stroke="#33485a" stroke-width="1" stroke-linejoin="round"/></svg>
<div class="t" style="left:1657.0px;top:704.2px;font-size:12.6px;color:#1e1e24;">Камень</div>
<div class="a" style="left:1722px;top:654px;width:66px;height:66px;box-sizing:border-box;border:1px solid #e4e4ec;border-bottom-width:1px"></div>
<svg style="left:1732px;top:663px" width="42" height="40" viewBox="0 0 42 40"><path d="M1.2 22.5 L9.8 19 L10.75 38.25z" fill="#8c8c8c"/><path d="M4.5 5.5 L10.5 4.4 L11.8 6.8 L41.2 2 L9.9 9.9 L10.75 38.25z" fill="#7ab8e0" stroke="#3a5a72" stroke-width="0.8" stroke-linejoin="round"/><path d="M9.9 9.9 L41.2 2.2 L39.1 27.4 L10.75 38.25z" fill="#b99a72" stroke="#33485a" stroke-width="1" stroke-linejoin="round"/></svg>
<div class="t" style="left:1725.0px;top:704.2px;font-size:12.6px;color:#1e1e24;">Кирпич</div>
<div class="a" style="left:1790px;top:654px;width:66px;height:66px;box-sizing:border-box;border:1px solid #e4e4ec;border-bottom-width:1px"></div>
<svg style="left:1800px;top:663px" width="42" height="40" viewBox="0 0 42 40"><path d="M1.2 22.5 L9.8 19 L10.75 38.25z" fill="#8c8c8c"/><path d="M4.5 5.5 L10.5 4.4 L11.8 6.8 L41.2 2 L9.9 9.9 L10.75 38.25z" fill="#7ab8e0" stroke="#3a5a72" stroke-width="0.8" stroke-linejoin="round"/><path d="M9.9 9.9 L41.2 2.2 L39.1 27.4 L10.75 38.25z" fill="#b99a72" stroke="#33485a" stroke-width="1" stroke-linejoin="round"/></svg>
<div class="t" style="left:1793.0px;top:704.2px;font-size:12.6px;color:#1e1e24;">Кровля</div>
<div class="a" style="left:1450px;top:722px;width:66px;height:66px;box-sizing:border-box;border:1px solid #e4e4ec;border-bottom-width:1px"></div>
<svg style="left:1460px;top:731px" width="42" height="40" viewBox="0 0 42 40"><path d="M1.2 22.5 L9.8 19 L10.75 38.25z" fill="#8c8c8c"/><path d="M4.5 5.5 L10.5 4.4 L11.8 6.8 L41.2 2 L9.9 9.9 L10.75 38.25z" fill="#7ab8e0" stroke="#3a5a72" stroke-width="0.8" stroke-linejoin="round"/><path d="M9.9 9.9 L41.2 2.2 L39.1 27.4 L10.75 38.25z" fill="#b99a72" stroke="#33485a" stroke-width="1" stroke-linejoin="round"/></svg>
<div class="t" style="left:1453.0px;top:772.2px;font-size:12.6px;color:#1e1e24;">Металл</div>
<div class="a" style="left:1518px;top:722px;width:66px;height:66px;box-sizing:border-box;border:1px solid #e4e4ec;border-bottom-width:1px"></div>
<svg style="left:1528px;top:731px" width="42" height="40" viewBox="0 0 42 40"><path d="M1.2 22.5 L9.8 19 L10.75 38.25z" fill="#8c8c8c"/><path d="M4.5 5.5 L10.5 4.4 L11.8 6.8 L41.2 2 L9.9 9.9 L10.75 38.25z" fill="#7ab8e0" stroke="#3a5a72" stroke-width="0.8" stroke-linejoin="round"/><path d="M9.9 9.9 L41.2 2.2 L39.1 27.4 L10.75 38.25z" fill="#b99a72" stroke="#33485a" stroke-width="1" stroke-linejoin="round"/></svg>
<div class="t" style="left:1521.0px;top:772.2px;font-size:12.6px;color:#1e1e24;">Одното...</div>
<div class="a" style="left:1586px;top:722px;width:66px;height:66px;box-sizing:border-box;border:1px solid #e4e4ec;border-bottom-width:1px"></div>
<svg style="left:1596px;top:731px" width="42" height="40" viewBox="0 0 42 40"><path d="M1.2 22.5 L9.8 19 L10.75 38.25z" fill="#8c8c8c"/><path d="M4.5 5.5 L10.5 4.4 L11.8 6.8 L41.2 2 L9.9 9.9 L10.75 38.25z" fill="#7ab8e0" stroke="#3a5a72" stroke-width="0.8" stroke-linejoin="round"/><path d="M9.9 9.9 L41.2 2.2 L39.1 27.4 L10.75 38.25z" fill="#b99a72" stroke="#33485a" stroke-width="1" stroke-linejoin="round"/></svg>
<div class="t" style="left:1589.0px;top:772.2px;font-size:12.6px;color:#1e1e24;">Пластик</div>
<div class="a" style="left:1654px;top:722px;width:66px;height:66px;box-sizing:border-box;border:1px solid #e4e4ec;border-bottom-width:1px"></div>
<svg style="left:1664px;top:731px" width="42" height="40" viewBox="0 0 42 40"><path d="M1.2 22.5 L9.8 19 L10.75 38.25z" fill="#8c8c8c"/><path d="M4.5 5.5 L10.5 4.4 L11.8 6.8 L41.2 2 L9.9 9.9 L10.75 38.25z" fill="#7ab8e0" stroke="#3a5a72" stroke-width="0.8" stroke-linejoin="round"/><path d="M9.9 9.9 L41.2 2.2 L39.1 27.4 L10.75 38.25z" fill="#b99a72" stroke="#33485a" stroke-width="1" stroke-linejoin="round"/></svg>
<div class="t" style="left:1657.0px;top:772.2px;font-size:12.6px;color:#1e1e24;">Плитка</div>
<div class="a" style="left:1722px;top:722px;width:66px;height:66px;box-sizing:border-box;border:1px solid #e4e4ec;border-bottom-width:1px"></div>
<svg style="left:1732px;top:731px" width="42" height="40" viewBox="0 0 42 40"><path d="M1.2 22.5 L9.8 19 L10.75 38.25z" fill="#8c8c8c"/><path d="M4.5 5.5 L10.5 4.4 L11.8 6.8 L41.2 2 L9.9 9.9 L10.75 38.25z" fill="#7ab8e0" stroke="#3a5a72" stroke-width="0.8" stroke-linejoin="round"/><path d="M9.9 9.9 L41.2 2.2 L39.1 27.4 L10.75 38.25z" fill="#b99a72" stroke="#33485a" stroke-width="1" stroke-linejoin="round"/></svg>
<div class="t" style="left:1725.0px;top:772.2px;font-size:12.6px;color:#1e1e24;">Стекло</div>
<div class="a" style="left:1790px;top:722px;width:66px;height:66px;box-sizing:border-box;border:1px solid #e4e4ec;border-bottom-width:1px"></div>
<svg style="left:1800px;top:731px" width="42" height="40" viewBox="0 0 42 40"><path d="M1.2 22.5 L9.8 19 L10.75 38.25z" fill="#8c8c8c"/><path d="M4.5 5.5 L10.5 4.4 L11.8 6.8 L41.2 2 L9.9 9.9 L10.75 38.25z" fill="#7ab8e0" stroke="#3a5a72" stroke-width="0.8" stroke-linejoin="round"/><path d="M9.9 9.9 L41.2 2.2 L39.1 27.4 L10.75 38.25z" fill="#b99a72" stroke="#33485a" stroke-width="1" stroke-linejoin="round"/></svg>
<div class="t" style="left:1793.0px;top:772.2px;font-size:12.6px;color:#1e1e24;">Ткань</div>
<div class="a" style="left:1450px;top:790px;width:66px;height:51px;box-sizing:border-box;border:1px solid #e4e4ec;border-bottom-width:0"></div>
<svg style="left:1460px;top:799px" width="42" height="40" viewBox="0 0 42 40"><path d="M1.2 22.5 L9.8 19 L10.75 38.25z" fill="#8c8c8c"/><path d="M4.5 5.5 L10.5 4.4 L11.8 6.8 L41.2 2 L9.9 9.9 L10.75 38.25z" fill="#7ab8e0" stroke="#3a5a72" stroke-width="0.8" stroke-linejoin="round"/><path d="M9.9 9.9 L41.2 2.2 L39.1 27.4 L10.75 38.25z" fill="#b99a72" stroke="#33485a" stroke-width="1" stroke-linejoin="round"/></svg>
<div class="a" style="left:1518px;top:790px;width:66px;height:51px;box-sizing:border-box;border:1px solid #e4e4ec;border-bottom-width:0"></div>
<svg style="left:1528px;top:799px" width="42" height="40" viewBox="0 0 42 40"><path d="M1.2 22.5 L9.8 19 L10.75 38.25z" fill="#8c8c8c"/><path d="M4.5 5.5 L10.5 4.4 L11.8 6.8 L41.2 2 L9.9 9.9 L10.75 38.25z" fill="#7ab8e0" stroke="#3a5a72" stroke-width="0.8" stroke-linejoin="round"/><path d="M9.9 9.9 L41.2 2.2 L39.1 27.4 L10.75 38.25z" fill="#b99a72" stroke="#33485a" stroke-width="1" stroke-linejoin="round"/></svg>
<div class="a" style="left:1437px;top:852px;width:466px;height:2px;background:#e4e8ee"></div>
<div class="a" style="left:1437px;top:857px;width:467px;height:26px;background:#e1e1e9"></div>
<svg style="left:1445px;top:864px" width="8" height="13" viewBox="0 0 8 13"><path d="M1 1 L6.8 6.5 L1 12" fill="none" stroke="#505058" stroke-width="1.2"/></svg>
<div class="t" style="left:1462.2px;top:863.7px;font-size:12.6px;color:#3a3a44;">Компоненты</div>
<div class="a" style="left:1881.5px;top:860px;width:20.0px;height:20px;box-sizing:border-box;border:1px solid #c8c8d0;border-radius:3px;background:#fff"></div>
<svg style="left:1886.5px;top:865px" width="10" height="10" viewBox="0 0 10 10"><path d="M1 1 L9 9 M9 1 L1 9" stroke="#505058" stroke-width="1"/></svg>
<div class="a" style="left:1437px;top:884px;width:467px;height:26px;background:#e1e1e9"></div>
<svg style="left:1445px;top:891px" width="8" height="13" viewBox="0 0 8 13"><path d="M1 1 L6.8 6.5 L1 12" fill="none" stroke="#505058" stroke-width="1.2"/></svg>
<div class="t" style="left:1462.2px;top:890.7px;font-size:12.6px;color:#3a3a44;">Стили</div>
<div class="a" style="left:1881.5px;top:887px;width:20.0px;height:20px;box-sizing:border-box;border:1px solid #c8c8d0;border-radius:3px;background:#fff"></div>
<svg style="left:1886.5px;top:892px" width="10" height="10" viewBox="0 0 10 10"><path d="M1 1 L9 9 M9 1 L1 9" stroke="#505058" stroke-width="1"/></svg>
<div class="a" style="left:1437px;top:911px;width:467px;height:26px;background:#e1e1e9"></div>
<svg style="left:1445px;top:918px" width="8" height="13" viewBox="0 0 8 13"><path d="M1 1 L6.8 6.5 L1 12" fill="none" stroke="#505058" stroke-width="1.2"/></svg>
<div class="t" style="left:1462.2px;top:917.7px;font-size:12.6px;color:#3a3a44;">Окружающая среда</div>
<div class="a" style="left:1881.5px;top:914px;width:20.0px;height:20px;box-sizing:border-box;border:1px solid #c8c8d0;border-radius:3px;background:#fff"></div>
<svg style="left:1886.5px;top:919px" width="10" height="10" viewBox="0 0 10 10"><path d="M1 1 L9 9 M9 1 L1 9" stroke="#505058" stroke-width="1"/></svg>
<div class="a" style="left:1437px;top:938px;width:467px;height:26px;background:#e1e1e9"></div>
<svg style="left:1445px;top:945px" width="8" height="13" viewBox="0 0 8 13"><path d="M1 1 L6.8 6.5 L1 12" fill="none" stroke="#505058" stroke-width="1.2"/></svg>
<div class="t" style="left:1462.2px;top:944.7px;font-size:12.6px;color:#3a3a44;">Метки</div>
<div class="a" style="left:1881.5px;top:941px;width:20.0px;height:20px;box-sizing:border-box;border:1px solid #c8c8d0;border-radius:3px;background:#fff"></div>
<svg style="left:1886.5px;top:946px" width="10" height="10" viewBox="0 0 10 10"><path d="M1 1 L9 9 M9 1 L1 9" stroke="#505058" stroke-width="1"/></svg>
<div class="a" style="left:1437px;top:965px;width:467px;height:26px;background:#e1e1e9"></div>
<svg style="left:1445px;top:972px" width="8" height="13" viewBox="0 0 8 13"><path d="M1 1 L6.8 6.5 L1 12" fill="none" stroke="#505058" stroke-width="1.2"/></svg>
<div class="t" style="left:1462.2px;top:971.7px;font-size:12.6px;color:#3a3a44;">Тени</div>
<div class="a" style="left:1881.5px;top:968px;width:20.0px;height:20px;box-sizing:border-box;border:1px solid #c8c8d0;border-radius:3px;background:#fff"></div>
<svg style="left:1886.5px;top:973px" width="10" height="10" viewBox="0 0 10 10"><path d="M1 1 L9 9 M9 1 L1 9" stroke="#505058" stroke-width="1"/></svg>
<div class="a" style="left:1437px;top:992px;width:467px;height:26px;background:#e1e1e9"></div>
<svg style="left:1445px;top:999px" width="8" height="13" viewBox="0 0 8 13"><path d="M1 1 L6.8 6.5 L1 12" fill="none" stroke="#505058" stroke-width="1.2"/></svg>
<div class="t" style="left:1462.2px;top:998.7px;font-size:12.6px;color:#3a3a44;">Сцены</div>
<div class="a" style="left:1881.5px;top:995px;width:20.0px;height:20px;box-sizing:border-box;border:1px solid #c8c8d0;border-radius:3px;background:#fff"></div>
<svg style="left:1886.5px;top:1000px" width="10" height="10" viewBox="0 0 10 10"><path d="M1 1 L9 9 M9 1 L1 9" stroke="#505058" stroke-width="1"/></svg>
<div class="a" style="left:1437px;top:1019px;width:467px;height:26px;background:#e1e1e9"></div>
<svg style="left:1445px;top:1026px" width="8" height="13" viewBox="0 0 8 13"><path d="M1 1 L6.8 6.5 L1 12" fill="none" stroke="#505058" stroke-width="1.2"/></svg>
<div class="t" style="left:1462.2px;top:1025.7px;font-size:12.6px;color:#3a3a44;">Учебник</div>
<div class="a" style="left:1881.5px;top:1022px;width:20.0px;height:20px;box-sizing:border-box;border:1px solid #c8c8d0;border-radius:3px;background:#fff"></div>
<svg style="left:1886.5px;top:1027px" width="10" height="10" viewBox="0 0 10 10"><path d="M1 1 L9 9 M9 1 L1 9" stroke="#505058" stroke-width="1"/></svg>
<svg style="left:1432px;top:556px" width="3" height="20" viewBox="0 0 3 20"><g fill="#c0c0c8"><rect x="0.8" y="1" width="1.2" height="1.2"/><rect x="0.8" y="4" width="1.2" height="1.2"/><rect x="0.8" y="7" width="1.2" height="1.2"/><rect x="0.8" y="10" width="1.2" height="1.2"/><rect x="0.8" y="13" width="1.2" height="1.2"/><rect x="0.8" y="16" width="1.2" height="1.2"/></g></svg>
<svg style="left:0;top:1047px" width="80" height="33" viewBox="0 0 80 33"><circle cx="15.9" cy="17" r="6.6" fill="none" stroke="#a8a8ac" stroke-width="1"/><circle cx="15.9" cy="15.4" r="2.6" fill="#909094"/><path d="M13.6 16.2 L18.2 16.2 L15.9 21.6z" fill="#909094"/><circle cx="15.9" cy="15.3" r="0.9" fill="#f0f0f4"/><circle cx="44" cy="16.9" r="6.6" fill="none" stroke="#000" stroke-width="1.2"/><circle cx="44" cy="13.4" r="1" fill="#000"/><circle cx="44" cy="16.6" r="1.9" fill="#000"/><path d="M43.1 17 H44.9 V21.2 H43.1z" fill="#000"/><rect x="64" y="6" width="2" height="22.5" fill="#dcdce4"/></svg>
<div class="a" style="left:1701.5px;top:1053px;width:1.0px;height:22px;background:#d8d8de"></div>
<div class="a" style="left:1719px;top:1051px;width:199px;height:26px;box-sizing:border-box;border:1px solid #b8b8be;border-radius:3px;background:#f4f4f8"></div>
<div class="a" style="left:727px;top:147px;width:523px;height:566px;box-sizing:border-box;border:1px solid #008000;border-right-width:2px;border-radius:8px;background:#fff;box-shadow:0 14px 48px rgba(0,0,0,0.30),0 2px 8px rgba(0,0,0,0.09);overflow:hidden"></div>
<div class="a" style="left:727px;top:147px;width:523px;height:31px;border-radius:8px 8px 0 0;background:#008000"></div>
<svg style="left:734px;top:151px" width="20" height="20" viewBox="0 0 20 20"><g fill="none" stroke="#0d62b4" stroke-width="1.35" stroke-linejoin="round"><path d="M4.2 6.4 L9.8 3.3 L16.4 6.7 V13.6 L10.8 17.2"/><path d="M6 7 L9.8 6.2 L13.6 8.2 V12.6 L12 13.4"/><path d="M3.4 8.4 L8.6 11 V17.4"/><path d="M4.2 12.2 L7.8 14.1"/><path d="M3.4 14.4 L8.6 17.2"/><path d="M8.4 8.6 L10.8 9.9 V17.2"/></g></svg>
<div class="t" style="left:758.0px;top:155.3px;font-size:11.8px;color:#7ab97a;">Панели инструментов</div>
<svg style="left:1228px;top:157px" width="11" height="11" viewBox="0 0 11 11"><path d="M0.5 0.5 L10.5 10.5 M10.5 0.5 L0.5 10.5" stroke="#72b872" stroke-width="1"/></svg>
<div class="a" style="left:740px;top:217px;width:498px;height:452px;box-sizing:border-box;border:1px solid #a6a6a6;background:#fff"></div>
<div class="a" style="left:739px;top:189px;width:159px;height:29px;box-sizing:border-box;border:1px solid #dcdce6;border-bottom:none;border-radius:3px 3px 0 0;background:#fff"></div>
<div class="a" style="left:740px;top:217px;width:157px;height:2px;background:#fff"></div>
<div class="a" style="left:740px;top:217px;width:1px;height:452px;background:#a6a6a6"></div>
<div class="a" style="left:897px;top:192px;width:92px;height:25px;box-sizing:border-box;border:1px solid #dcdce6;border-bottom:none;border-radius:3px 3px 0 0;background:#fff"></div>
<div class="t" style="left:751.5px;top:196.9px;font-size:13px;color:#1e1e1e;">Панели инструментов</div>
<div class="t" style="left:909.7px;top:197.9px;font-size:13px;color:#1e1e1e;">Параметры</div>
<div class="a" style="left:750px;top:227px;width:352px;height:432px;box-sizing:border-box;border:1px solid #a6a6a6;background:#fff"></div>
<div class="a" style="left:754px;top:229px;width:14px;height:14px;box-sizing:border-box;border:1px solid #bdbdbd;background:#fff"></div>
<div class="t" style="left:774.4px;top:229.7px;font-size:12.6px;color:#1e1e1e;">AI Assistant</div>
<div class="a" style="left:754px;top:246px;width:14px;height:14px;box-sizing:border-box;border:1px solid #bdbdbd;background:#fff"></div>
<div class="t" style="left:774.4px;top:246.7px;font-size:12.6px;color:#1e1e1e;">AI Render</div>
<div class="a" style="left:754px;top:263px;width:14px;height:14px;box-sizing:border-box;border:1px solid #bdbdbd;background:#fff"></div>
<svg style="left:754px;top:263px" width="14" height="14" viewBox="0 0 14 14"><path d="M3.2 7.2 L5.6 10.6 L10.8 2.8" fill="none" stroke="#111" stroke-width="1.6"/></svg>
<div class="t" style="left:774.4px;top:263.7px;font-size:12.6px;color:#1e1e1e;">Trimble Connect</div>
<div class="a" style="left:754px;top:280px;width:14px;height:14px;box-sizing:border-box;border:1px solid #bdbdbd;background:#fff"></div>
<div class="t" style="left:774.4px;top:280.7px;font-size:12.6px;color:#1e1e1e;">Большой набор инструментов</div>
<div class="a" style="left:754px;top:297px;width:14px;height:14px;box-sizing:border-box;border:1px solid #bdbdbd;background:#fff"></div>
<div class="t" style="left:774.4px;top:297.7px;font-size:12.6px;color:#1e1e1e;">Виды</div>
<div class="a" style="left:754px;top:314px;width:14px;height:14px;box-sizing:border-box;border:1px solid #bdbdbd;background:#fff"></div>
<div class="t" style="left:774.4px;top:314.7px;font-size:12.6px;color:#1e1e1e;">Динамические компоненты</div>
<div class="a" style="left:754px;top:331px;width:14px;height:14px;box-sizing:border-box;border:1px solid #bdbdbd;background:#fff"></div>
<div class="t" style="left:774.4px;top:331.7px;font-size:12.6px;color:#1e1e1e;">Добавить местоположение</div>
<div class="a" style="left:754px;top:348px;width:14px;height:14px;box-sizing:border-box;border:1px solid #bdbdbd;background:#fff"></div>
<div class="t" style="left:774.4px;top:348.7px;font-size:12.6px;color:#1e1e1e;">Измерения</div>
<div class="a" style="left:754px;top:365px;width:14px;height:14px;box-sizing:border-box;border:1px solid #bdbdbd;background:#fff"></div>
<div class="t" style="left:774.4px;top:365.7px;font-size:12.6px;color:#1e1e1e;">Инструменты для работы со сплошными объектами</div>
<div class="a" style="left:754px;top:382px;width:14px;height:14px;box-sizing:border-box;border:1px solid #bdbdbd;background:#fff"></div>
<svg style="left:754px;top:382px" width="14" height="14" viewBox="0 0 14 14"><path d="M3.2 7.2 L5.6 10.6 L10.8 2.8" fill="none" stroke="#111" stroke-width="1.6"/></svg>
<div class="t" style="left:774.4px;top:382.7px;font-size:12.6px;color:#1e1e1e;">Инструменты искусственного интеллекта</div>
<div class="a" style="left:754px;top:399px;width:14px;height:14px;box-sizing:border-box;border:1px solid #bdbdbd;background:#fff"></div>
<div class="t" style="left:774.4px;top:399.7px;font-size:12.6px;color:#1e1e1e;">Камера</div>
<div class="a" style="left:754px;top:416px;width:14px;height:14px;box-sizing:border-box;border:1px solid #bdbdbd;background:#fff"></div>
<div class="t" style="left:774.4px;top:416.7px;font-size:12.6px;color:#1e1e1e;">Классификатор</div>
<div class="a" style="left:754px;top:433px;width:14px;height:14px;box-sizing:border-box;border:1px solid #bdbdbd;background:#fff"></div>
<div class="t" style="left:774.4px;top:433.7px;font-size:12.6px;color:#1e1e1e;">Метки</div>
<div class="a" style="left:754px;top:450px;width:14px;height:14px;box-sizing:border-box;border:1px solid #bdbdbd;background:#fff"></div>
<svg style="left:754px;top:450px" width="14" height="14" viewBox="0 0 14 14"><path d="M3.2 7.2 L5.6 10.6 L10.8 2.8" fill="none" stroke="#111" stroke-width="1.6"/></svg>
<div class="t" style="left:774.4px;top:450.7px;font-size:12.6px;color:#1e1e1e;">Начало работы</div>
<div class="a" style="left:754px;top:467px;width:14px;height:14px;box-sizing:border-box;border:1px solid #bdbdbd;background:#fff"></div>
<div class="t" style="left:774.4px;top:467.7px;font-size:12.6px;color:#1e1e1e;">Основные</div>
<div class="a" style="left:754px;top:484px;width:14px;height:14px;box-sizing:border-box;border:1px solid #bdbdbd;background:#fff"></div>
<div class="t" style="left:774.4px;top:484.7px;font-size:12.6px;color:#1e1e1e;">Песочница</div>
<div class="a" style="left:754px;top:501px;width:14px;height:14px;box-sizing:border-box;border:1px solid #bdbdbd;background:#fff"></div>
<div class="t" style="left:774.4px;top:501.7px;font-size:12.6px;color:#1e1e1e;">Построение</div>
<div class="a" style="left:754px;top:518px;width:14px;height:14px;box-sizing:border-box;border:1px solid #bdbdbd;background:#fff"></div>
<div class="t" style="left:774.4px;top:518.7px;font-size:12.6px;color:#1e1e1e;">Редактировать</div>
<div class="a" style="left:754px;top:535px;width:14px;height:14px;box-sizing:border-box;border:1px solid #bdbdbd;background:#fff"></div>
<div class="t" style="left:774.4px;top:535.7px;font-size:12.6px;color:#1e1e1e;">Рисование</div>
<div class="a" style="left:754px;top:552px;width:14px;height:14px;box-sizing:border-box;border:1px solid #bdbdbd;background:#fff"></div>
<div class="t" style="left:774.4px;top:552.7px;font-size:12.6px;color:#1e1e1e;">Сечение</div>
<div class="a" style="left:754px;top:569px;width:14px;height:14px;box-sizing:border-box;border:1px solid #bdbdbd;background:#fff"></div>
<div class="t" style="left:774.4px;top:569.7px;font-size:12.6px;color:#1e1e1e;">Стандартный</div>
<div class="a" style="left:754px;top:586px;width:14px;height:14px;box-sizing:border-box;border:1px solid #bdbdbd;background:#fff"></div>
<div class="t" style="left:774.4px;top:586.7px;font-size:12.6px;color:#1e1e1e;">Стили</div>
<div class="a" style="left:754px;top:603px;width:14px;height:14px;box-sizing:border-box;border:1px solid #bdbdbd;background:#fff"></div>
<div class="t" style="left:774.4px;top:603.7px;font-size:12.6px;color:#1e1e1e;">Тени</div>
<div class="a" style="left:754px;top:620px;width:14px;height:14px;box-sizing:border-box;border:1px solid #bdbdbd;background:#fff"></div>
<div class="t" style="left:774.4px;top:620.7px;font-size:12.6px;color:#1e1e1e;">Хранилище</div>
<div class="a" style="left:1108px;top:227px;width:119px;height:24px;box-sizing:border-box;border:1px solid #d4d4d8;border-radius:3px;background:linear-gradient(#fafafa,#ececee)"></div>
<div class="t" style="left:1017.5px;width:300px;text-align:center;top:232.6px;font-size:12.5px;color:#9898a8;">Сбросить</div>
<div class="a" style="left:1108px;top:258px;width:119px;height:24px;box-sizing:border-box;border:1px solid #9a9aa2;border-radius:3px;background:#fbfbfb"></div>
<div class="t" style="left:1017.5px;width:300px;text-align:center;top:263.6px;font-size:12.5px;color:#1a1a1a;">Сбросить все</div>
<div class="a" style="left:1108px;top:289px;width:119px;height:24px;box-sizing:border-box;border:1px solid #9a9aa2;border-radius:3px;background:#fbfbfb"></div>
<div class="t" style="left:1017.5px;width:300px;text-align:center;top:294.6px;font-size:12.5px;color:#1a1a1a;">Создать...</div>
<div class="a" style="left:1108px;top:320px;width:119px;height:24px;box-sizing:border-box;border:1px solid #d4d4d8;border-radius:3px;background:linear-gradient(#fafafa,#ececee)"></div>
<div class="t" style="left:1017.5px;width:300px;text-align:center;top:325.6px;font-size:12.5px;color:#9898a8;">Переименовать...</div>
<div class="a" style="left:1108px;top:351px;width:119px;height:24px;box-sizing:border-box;border:1px solid #d4d4d8;border-radius:3px;background:linear-gradient(#fafafa,#ececee)"></div>
<div class="t" style="left:1017.5px;width:300px;text-align:center;top:356.6px;font-size:12.5px;color:#9898a8;">Удалить</div>
<div class="a" style="left:1158px;top:677px;width:80px;height:24px;box-sizing:border-box;border:1px solid #9a9aa2;border-radius:3px;background:#fbfbfb"></div>
<div class="t" style="left:1048.0px;width:300px;text-align:center;top:682.6px;font-size:12.5px;color:#1a1a1a;">Закрыть</div>
<div class="a" style="left:293px;top:310px;width:313px;height:589px;box-sizing:border-box;border:1px solid #0078d4;border-width:0 1px 2px 1px;border-radius:8px;background:#fff;box-shadow:0 14px 48px rgba(0,0,0,0.32),0 2px 8px rgba(0,0,0,0.10)"></div>
<div class="a" style="left:293px;top:310px;width:313px;height:31px;border-radius:8px 8px 0 0;background:#0078d4"></div>
<svg style="left:299.5px;top:314px" width="20" height="20" viewBox="0 0 20 20"><g fill="none" stroke="#0a58a8" stroke-width="1.35" stroke-linejoin="round"><path d="M4.2 6.4 L9.8 3.3 L16.4 6.7 V13.6 L10.8 17.2"/><path d="M6 7 L9.8 6.2 L13.6 8.2 V12.6 L12 13.4"/><path d="M3.4 8.4 L8.6 11 V17.4"/><path d="M4.2 12.2 L7.8 14.1"/><path d="M3.4 14.4 L8.6 17.2"/><path d="M8.4 8.6 L10.8 9.9 V17.2"/></g></svg>
<div class="t" style="left:324.0px;top:319.3px;font-size:11.9px;color:#ffffff;">Создать компонент</div>
<svg style="left:585px;top:320px" width="11" height="11" viewBox="0 0 11 11"><path d="M0.5 0.5 L10.5 10.5 M10.5 0.5 L0.5 10.5" stroke="#fff" stroke-width="1.1"/></svg>
<div class="t" style="left:305.3px;top:353.9px;font-size:13px;color:#2a2a2a;font-weight:bold;">Общие</div>
<div class="a" style="left:305px;top:375px;width:289px;height:2px;background:#dcdce6"></div>
<div class="t" style="right:1533.0px;top:384.7px;font-size:12.9px;color:#333;">Название:</div>
<div class="a" style="left:393px;top:383px;width:201px;height:25px;box-sizing:border-box;border:1px solid #8a8a8a;border-bottom-color:#5a5a5a;border-radius:3px;background:#fff"></div>
<div class="a" style="left:396px;top:387px;width:80px;height:17px;background:#cce4f7"></div>
<div class="t" style="left:396.5px;top:388.9px;font-size:12.9px;color:#1a1a1a;">Компонент#1</div>
<div class="a" style="left:476px;top:387px;width:1.3999999999999773px;height:18px;background:#111"></div>
<div class="t" style="right:1533.0px;top:414.3px;font-size:12.9px;color:#333;">Описание:</div>
<div class="a" style="left:393px;top:414px;width:201px;height:70px;box-sizing:border-box;border:1px solid #a8a8a8;background:#fff"></div>
<div class="t" style="left:305.3px;top:491.9px;font-size:13px;color:#2a2a2a;font-weight:bold;">Совмещение</div>
<div class="a" style="left:305px;top:513px;width:289px;height:2px;background:#dcdce6"></div>
<div class="t" style="right:1533.0px;top:522.1px;font-size:12.9px;color:#333;">Приклеить:</div>
<div class="a" style="left:393px;top:521px;width:201px;height:25px;box-sizing:border-box;border:1px solid #b0b0b0;border-radius:3px;background:#fdfdfd"></div>
<div class="t" style="left:397.5px;top:526.7px;font-size:12.9px;color:#1a1a1a;">Нет</div>
<svg style="left:578px;top:531px" width="9" height="5" viewBox="0 0 9 5"><path d="M0.5 0.5 H8 L4.25 4.5z" fill="#5a5a5a"/></svg>
<div class="a" style="left:393px;top:552px;width:201px;height:25px;box-sizing:border-box;border:1px solid #9a9aa2;border-radius:3px;background:#fbfbfb"></div>
<div class="t" style="left:343.5px;width:300px;text-align:center;top:557.8px;font-size:12.9px;color:#1a1a1a;">Задать оси компонентов</div>
<div class="a" style="left:393px;top:587px;width:13px;height:13px;box-sizing:border-box;border:1px solid #333;background:#fff;border-radius:1px"></div>
<div class="t" style="left:412.2px;top:587.8px;font-size:12.9px;color:#222;">Вырезать отверстие</div>
<div class="a" style="left:393px;top:615.5px;width:13px;height:13.0px;box-sizing:border-box;border:1px solid #333;background:#fff;border-radius:1px"></div>
<div class="t" style="left:412.2px;top:615.9px;font-size:12.9px;color:#222;">Всегда к камере</div>
<div class="a" style="left:393px;top:643.5px;width:13px;height:13.0px;box-sizing:border-box;border:1px solid #b8b8c4;background:#eeeef4;border-radius:1px"></div>
<div class="t" style="left:412.2px;top:643.9px;font-size:12.9px;color:#b4b4c0;">Тени к солнцу</div>
<div class="t" style="left:305.3px;top:669.3px;font-size:12.9px;color:#2a2a2a;font-weight:bold;">Дополнительные атрибуты</div>
<div class="a" style="left:305px;top:690px;width:289px;height:2px;background:#dcdce6"></div>
<div class="t" style="right:1533.0px;top:699.1px;font-size:12.9px;color:#333;">Цена:</div>
<div class="a" style="left:393px;top:698px;width:201px;height:24.5px;box-sizing:border-box;border:1px solid #b0b0b0;border-radius:3px;background:#fff"></div>
<div class="t" style="left:396.5px;top:703.4px;font-size:12.9px;color:#a8a8b8;">Введите цену определения</div>
<div class="t" style="right:1533.0px;top:730.1px;font-size:12.9px;color:#333;">Размер:</div>
<div class="a" style="left:393px;top:729px;width:201px;height:24.5px;box-sizing:border-box;border:1px solid #b0b0b0;border-radius:3px;background:#fff"></div>
<div class="t" style="left:396.5px;top:734.4px;font-size:12.9px;color:#a8a8b8;">Введите размер определения</div>
<div class="t" style="right:1533.0px;top:761.1px;font-size:12.9px;color:#333;">URL-адрес:</div>
<div class="a" style="left:393px;top:760px;width:201px;height:24.5px;box-sizing:border-box;border:1px solid #b0b0b0;border-radius:3px;background:#fff"></div>
<div class="t" style="left:396.5px;top:765.6px;font-size:12.45px;color:#a8a8b8;">Введите URL-адрес определения</div>
<div class="t" style="right:1533.0px;top:791.6px;font-size:12.9px;color:#333;">Тип:</div>
<div class="a" style="left:393px;top:791.5px;width:201px;height:24.5px;box-sizing:border-box;border:1px solid #d0d0d4;border-radius:3px;background:linear-gradient(#f6f6f6,#ececee)"></div>
<div class="t" style="left:398.0px;top:796.9px;font-size:12.9px;color:#9a9aa6;">Тип: &lt;неопределенный&gt;</div>
<svg style="left:578px;top:801px" width="9" height="5" viewBox="0 0 9 5"><path d="M0.5 0.5 H8 L4.25 4.5z" fill="#b0b0b8"/></svg>
<div class="a" style="left:305px;top:822px;width:289px;height:2px;background:#dcdce6"></div>
<div class="a" style="left:305px;top:834.5px;width:13px;height:13.0px;box-sizing:border-box;border:1px solid #333;background:#fff;border-radius:1px"></div>
<svg style="left:304.5px;top:834.0px" width="14" height="14" viewBox="0 0 14 14"><path d="M3.2 7.2 L5.6 10.6 L10.8 2.8" fill="none" stroke="#111" stroke-width="1.6"/></svg>
<div class="t" style="left:324.3px;top:834.7px;font-size:12.9px;color:#222;">Заменить выделение компонентом</div>
<div class="a" style="left:428.5px;top:862.5px;width:79.0px;height:24.5px;box-sizing:border-box;border:1px solid #7e8a96;border-radius:3px;background:#fbfbfb;box-shadow:inset 0 0 0 1px #dde3ea"></div>
<div class="t" style="left:318.0px;width:300px;text-align:center;top:867.5px;font-size:12.9px;color:#1a1a1a;">Создать</div>
<div class="a" style="left:514.5px;top:862.5px;width:79.5px;height:24.5px;box-sizing:border-box;border:1px solid #9a9aa2;border-radius:3px;background:#fbfbfb"></div>
<div class="t" style="left:404.2px;width:300px;text-align:center;top:867.5px;font-size:12.9px;color:#1a1a1a;">Отмена</div>
</body></html>
